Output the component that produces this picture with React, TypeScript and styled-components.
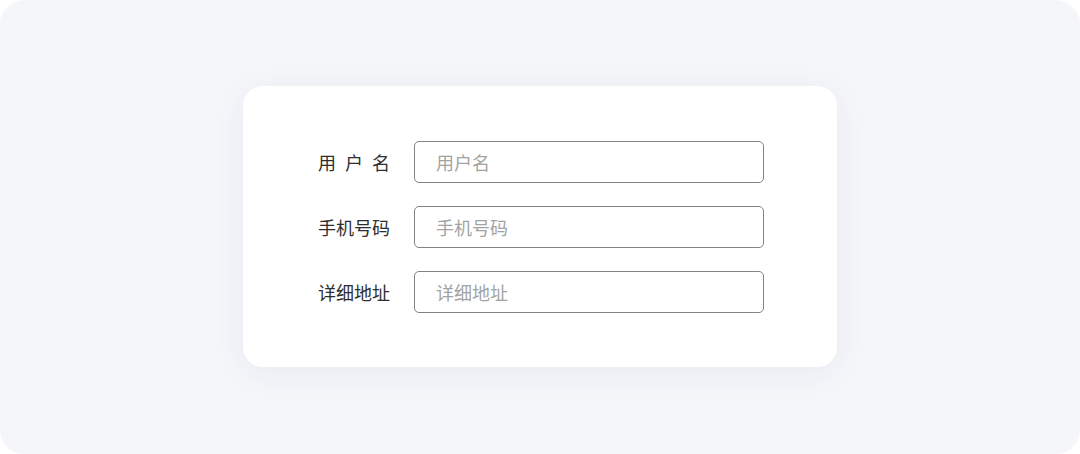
import React from "react";
import styled, { createGlobalStyle } from "styled-components";

const GlobalStyle = createGlobalStyle`
  html, body { margin: 0; padding: 0; background: #ffffff; }
  body { font-family: "Noto Sans CJK SC", "Noto Sans", sans-serif; }
`;

const Stage = styled.div`
  width: 1080px;
  height: 454px;
  background: #f5f6fa;
  border-radius: 24px;
  display: flex;
  align-items: flex-start;
  justify-content: center;
  padding-top: 86px;
  box-sizing: border-box;
`;

const Card = styled.form`
  width: 594px;
  height: 281px;
  box-sizing: border-box;
  background: #ffffff;
  border-radius: 20px;
  box-shadow: 0 6px 32px rgba(40, 50, 90, 0.06);
  padding: 55px 73px 0 75px;
  display: flex;
  flex-direction: column;
  gap: 23px;
`;

const Row = styled.label`
  display: flex;
  align-items: center;
  gap: 24px;
`;

const Label = styled.span`
  width: 72px;
  font-size: 18px;
  line-height: 24px;
  color: #2e2e2e;
  text-align: justify;
  text-align-last: justify;
  white-space: nowrap;
`;

const Input = styled.input`
  width: 350px;
  height: 42px;
  box-sizing: border-box;
  border: 1px solid #838383;
  border-radius: 5px;
  padding: 0 20px 0 21px;
  font-family: "Noto Sans CJK SC", "Noto Sans", sans-serif;
  font-size: 18px;
  color: #333333;
  background: #ffffff;
  outline: none;
  &::placeholder { color: #a3a3a3; }
`;

const fields = [
  { label: "用户名", placeholder: "用户名" },
  { label: "手机号码", placeholder: "手机号码" },
  { label: "详细地址", placeholder: "详细地址" },
];

export default function App() {
  return (
    <>
      <GlobalStyle />
      <Stage>
        <Card onSubmit={(e) => e.preventDefault()}>
          {fields.map((f) => (
            <Row key={f.label}>
              <Label>{f.label}</Label>
              <Input placeholder={f.placeholder} />
            </Row>
          ))}
        </Card>
      </Stage>
    </>
  );
}
